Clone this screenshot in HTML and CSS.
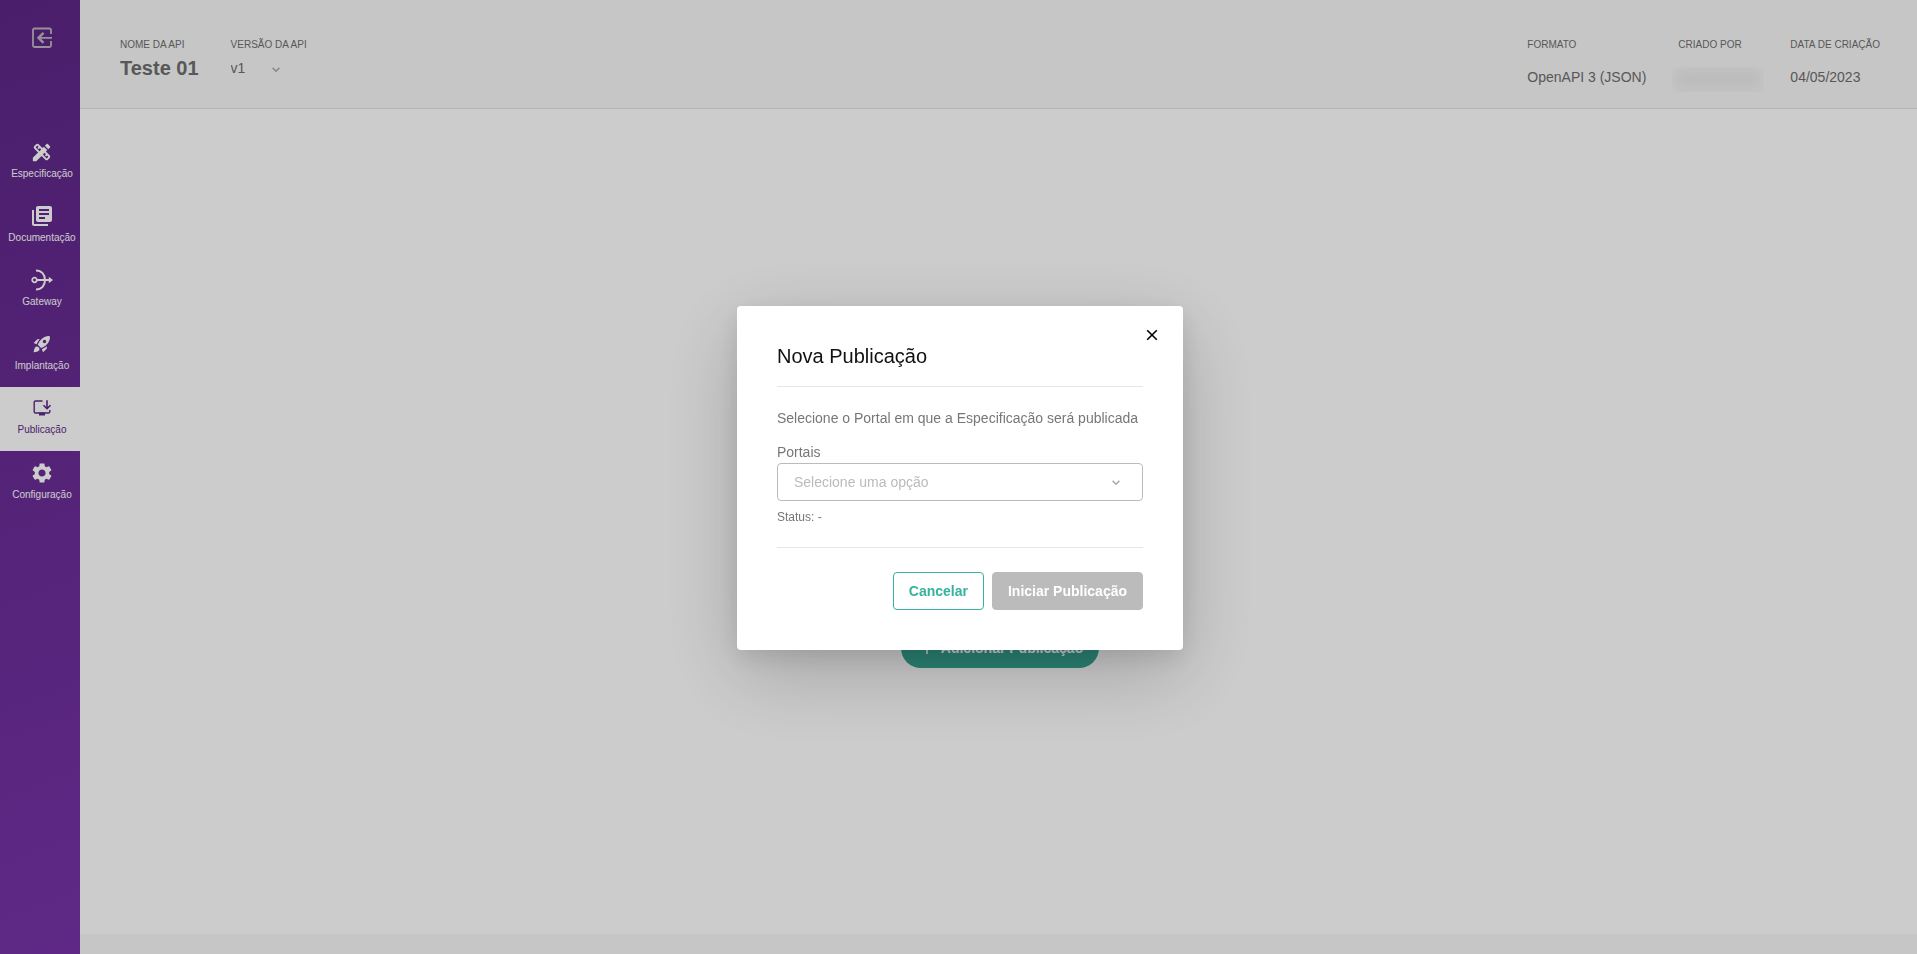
FILE: index.html
```html
<!DOCTYPE html>
<html lang="pt-BR">
<head>
<meta charset="utf-8">
<meta name="viewport" content="width=device-width, initial-scale=1">
<title>Teste 01 - Publicação</title>
<link rel="stylesheet" href="styles.css">
</head>
<body>
<div class="app">
  <aside class="sidebar">
    <button class="sidebar-exit" type="button" aria-label="Sair">
      <svg width="22" height="22" viewBox="0 0 22 22" fill="none" stroke="currentColor" stroke-width="1.800"><path d="M20 7V3a1.500 1.500 0 0 0-1.500-1.500h-15A1.500 1.500 0 0 0 2 3v15.500A1.500 1.500 0 0 0 3.500 20h15a1.500 1.500 0 0 0 1.500-1.500V14M21 10.800H8"/><path d="M12.500 5.800l-5 5 5 5" stroke-width="2.400"/></svg>
    </button>
    <nav class="nav">
      <a class="nav-item" href="#especificacao">
        <svg class="nav-icon" viewBox="0 0 24 24" fill="currentColor"><path d="M16.240 11.510l1.570-1.570-3.750-3.750-1.570 1.570-4.140-4.130c-.78-.78-2.050-.78-2.830 0l-1.900 1.900c-.78.780-.78 2.050 0 2.830l4.130 4.130L2 18.250V22h3.750l5.760-5.760 4.130 4.130c.95.950 2.230.6 2.830 0l1.900-1.900c.78-.78.78-2.050 0-2.830l-4.130-4.130zm-7.060-.44L5.040 6.940l1.890-1.900L8.200 6.310 7.020 7.500l1.410 1.410 1.190-1.190 1.450 1.450-1.890 1.900zm7.880 7.890l-4.130-4.130 1.900-1.900 1.450 1.450-1.190 1.190 1.410 1.410 1.190-1.190 1.270 1.270-1.900 1.900zM20.710 7.040a1 1 0 0 0 0-1.410l-2.340-2.340c-.47-.47-1.120-.29-1.410 0l-1.830 1.830 3.750 3.750 1.830-1.830z"/></svg>
        <span>Especificação</span>
      </a>
      <a class="nav-item" href="#documentacao">
        <svg class="nav-icon nav-icon-large" viewBox="0 0 24 24" fill="currentColor"><path d="M4 6H2v14c0 1.100.9 2 2 2h14v-2H4V6zm16-4H8c-1.100 0-2 .9-2 2v12c0 1.100.9 2 2 2h12c1.100 0 2-.9 2-2V4c0-1.100-.9-2-2-2zm-1 9H9V9h10v2zm-4 4H9v-2h6v2zm4-8H9V5h10v2z"/></svg>
        <span>Documentação</span>
      </a>
      <a class="nav-item" href="#gateway">
        <svg class="nav-icon" viewBox="0 0 22 22" fill="none" stroke="currentColor" stroke-width="2"><path d="M5 1.500c5.500 0 9 4 9 9.500s-3.500 9.500-9 9.500M6 11h14"/><circle cx="3.500" cy="11" r="2.300" stroke-width="1.700"/><path d="M17.800 7.800L22 11l-4.200 3.200z" fill="currentColor" stroke="none"/></svg>
        <span>Gateway</span>
      </a>
      <a class="nav-item" href="#implantacao">
        <svg class="nav-icon nav-icon-small" viewBox="0 0 24 24" fill="currentColor"><path d="M9.190 6.350c-2.040 2.290-3.440 5.580-3.570 5.890L2 10.690l4.050-4.050c.47-.47 1.150-.68 1.810-.55l1.330.26zM11.170 17s3.740-1.550 5.890-3.700c5.400-5.400 4.500-9.620 4.210-10.570-.95-.3-5.170-1.190-10.570 4.210C8.550 9.090 7 12.830 7 12.830L11.170 17zm6.480-2.190c-2.290 2.040-5.580 3.440-5.890 3.570L13.310 22l4.050-4.050c.47-.47.68-1.150.55-1.810l-.26-1.330zM9 18c0 .83-.34 1.580-.88 2.120C6.940 21.300 2 22 2 22s.7-4.940 1.880-6.120A3 3 0 0 1 9 18zm4-9c0-1.100.9-2 2-2s2 .9 2 2-.9 2-2 2-2-.9-2-2z"/></svg>
        <span>Implantação</span>
      </a>
      <a class="nav-item nav-item-active" href="#publicacao" aria-current="page">
        <svg class="nav-icon nav-icon-small" viewBox="0 0 20 20" fill="none" stroke="currentColor" stroke-width="1.400"><path d="M10.500 3H3.500C2.700 3 2.200 3.500 2.200 4.300v9.400c0 .8.500 1.300 1.300 1.300h13c.8 0 1.300-.5 1.300-1.300V12"/><path d="M15 2.300v8M11.500 7.200L15 10.700l3.500-3.500" stroke-width="1.600"/><path d="M7 14.500h6v3H7z" fill="currentColor" stroke="none"/></svg>
        <span>Publicação</span>
      </a>
      <a class="nav-item" href="#configuracao">
        <svg class="nav-icon nav-icon-large" viewBox="0 0 24 24" fill="currentColor"><path d="M19.140 12.940c.04-.3.060-.61.060-.94 0-.32-.02-.64-.07-.94l2.030-1.580c.18-.14.23-.41.120-.61l-1.920-3.320c-.12-.22-.37-.29-.59-.22l-2.390.96c-.5-.38-1.030-.7-1.620-.94l-.36-2.540c-.04-.24-.24-.41-.48-.41h-3.840c-.24 0-.43.170-.47.410l-.36 2.540c-.59.240-1.130.57-1.620.94l-2.390-.96c-.22-.08-.47 0-.59.220L2.740 8.870c-.12.210-.08.470.120.610l2.030 1.580c-.05.300-.09.630-.09.940s.02.640.07.940l-2.030 1.580c-.18.140-.23.410-.12.610l1.920 3.320c.12.220.37.290.59.220l2.390-.96c.5.380 1.030.7 1.620.94l.36 2.540c.05.240.24.410.48.410h3.840c.24 0 .44-.17.470-.41l.36-2.540c.59-.24 1.130-.56 1.620-.94l2.390.96c.22.080.47 0 .59-.22l1.920-3.320c.12-.22.070-.47-.12-.61l-2.010-1.580zM12 15.600c-1.980 0-3.600-1.620-3.600-3.600s1.620-3.600 3.600-3.600 3.600 1.620 3.600 3.600-1.620 3.600-3.600 3.600z"/></svg>
        <span>Configuração</span>
      </a>
    </nav>
  </aside>

  <div class="page">
    <header class="topbar">
      <div class="group">
        <div class="field">
          <span class="field-label">NOME DA API</span>
          <h1 class="api-name">Teste 01</h1>
        </div>
        <div class="field">
          <label class="field-label" for="versao">VERSÃO DA API</label>
          <span class="version">
            <select id="versao" class="version-select"><option>v1</option></select>
            <svg class="version-chevron" width="8" height="6" viewBox="0 0 8 6" fill="none" stroke="currentColor" stroke-width="1.500"><path d="M.6.900L4 4.300 7.400.900"/></svg>
          </span>
        </div>
      </div>
      <div class="group">
        <div class="field">
          <span class="field-label">FORMATO</span>
          <span class="field-value">OpenAPI 3 (JSON)</span>
        </div>
        <div class="field field-author">
          <span class="field-label">CRIADO POR</span>
          <span class="redacted"></span>
        </div>
        <div class="field">
          <span class="field-label">DATA DE CRIAÇÃO</span>
          <span class="field-value">04/05/2023</span>
        </div>
      </div>
    </header>
    <main class="content">
      <button class="add-button" type="button"><svg width="14" height="14" viewBox="0 0 14 14" fill="none" stroke="currentColor" stroke-width="1.500"><path d="M7 1v12M1 7h12"/></svg>Adicionar Publicação</button>
    </main>
    <footer class="footer"></footer>
  </div>
</div>

<div class="overlay">
  <section class="dialog" role="dialog" aria-modal="true" aria-labelledby="dialog-title">
    <button class="dialog-close" type="button" aria-label="Fechar">
      <svg width="12" height="12" viewBox="0 0 12 12" fill="none" stroke="currentColor" stroke-width="1.600"><path d="M1.200 1.200l9.600 9.600M10.800 1.200l-9.600 9.600"/></svg>
    </button>
    <h2 class="dialog-title" id="dialog-title">Nova Publicação</h2>
    <div class="dialog-body">
      <p class="dialog-text">Selecione o Portal em que a Especificação será publicada</p>
      <label class="dialog-label" for="portais">Portais</label>
      <span class="portal">
        <select id="portais" class="portal-select"><option>Selecione uma opção</option></select>
        <svg class="portal-chevron" width="8" height="6" viewBox="0 0 8 6" fill="none" stroke="currentColor" stroke-width="1.500"><path d="M.6.900L4 4.300 7.400.900"/></svg>
      </span>
      <p class="status">Status: -</p>
    </div>
    <div class="dialog-actions">
      <button class="button button-outline" type="button">Cancelar</button>
      <button class="button button-disabled" type="button" disabled>Iniciar Publicação</button>
    </div>
  </section>
</div>
</body>
</html>
```
FILE: styles.css
```css
* {
  box-sizing: border-box;
}

body {
  margin: 0;
  font-family: "Liberation Sans", Arial, sans-serif;
  font-size: 14px;
  line-height: 20px;
  color: #6e6e6e;
  background: #fff;
}

button,
select {
  font: inherit;
  cursor: pointer;
}

h1,
h2,
p {
  margin: 0;
}

.app {
  display: flex;
  min-height: 100vh;
}

/* Sidebar */

.sidebar {
  flex: none;
  width: 80px;
  background: linear-gradient(160deg, #5d2686, #7733a8);
}

.sidebar-exit {
  display: flex;
  justify-content: center;
  width: 100%;
  height: 131px;
  padding: 27px 0 0 4px;
  border: 0;
  background: none;
  color: #bdb8c0;
}

.nav {
  display: flex;
  flex-direction: column;
}

.nav-item {
  display: flex;
  flex-direction: column;
  align-items: center;
  gap: 5px;
  height: 64px;
  padding: 10px 0 0 4px;
  font-size: 10px;
  line-height: 12px;
  color: #fff;
  text-decoration: none;
}

.nav-item:last-child {
  padding-top: 11px;
}

.nav-item-active {
  background: #fff;
  color: #5f2a87;
}

.nav-icon {
  width: 22px;
  height: 22px;
}

.nav-icon-large {
  width: 24px;
  height: 24px;
  margin: -1px;
}

.nav-icon-small {
  width: 20px;
  height: 20px;
  margin: 1px;
}

/* Page */

.page {
  flex: 1;
  display: flex;
  flex-direction: column;
}

.topbar {
  display: flex;
  justify-content: space-between;
  height: 109px;
  padding: 39px 37px 0 40px;
  background: #f8f8f8;
  border-bottom: 1px solid #e4e4e4;
}

.group {
  display: flex;
  gap: 32px;
}

.field {
  display: flex;
  flex-direction: column;
}

.field-author {
  width: 80px;
}

.field-label {
  font-size: 10px;
  line-height: 12px;
}

.field-value {
  margin-top: 16px;
}

.api-name {
  margin-top: 5px;
  font-size: 20px;
  line-height: 24px;
}

.version {
  position: relative;
  width: 49px;
  margin-top: 7px;
}

.version-select {
  display: block;
  width: 100%;
  padding: 0;
  border: 0;
  background: none;
  color: inherit;
  appearance: none;
}

.version-chevron {
  position: absolute;
  top: 9px;
  right: 0;
  color: #aaa;
  pointer-events: none;
}

.redacted {
  height: 25px;
  margin: 16px -6px 0;
  background: #ebebeb;
  box-shadow: inset 0 0 12px 4px #f6f6f6;
}

.content {
  flex: 1;
  display: flex;
  align-items: flex-end;
  justify-content: center;
  padding: 0 0 266px 3px;
}

.add-button {
  display: flex;
  align-items: center;
  gap: 7px;
  height: 40px;
  padding: 0 16px 0 19px;
  border: 0;
  border-radius: 20px;
  background: #36a592;
  color: #fff;
  font-weight: bold;
}

.footer {
  height: 20px;
  background: #f8f8f8;
}

/* Dialog */

.overlay {
  position: fixed;
  inset: 0;
  display: flex;
  align-items: center;
  justify-content: center;
  padding: 2px 0 0 3px;
  background: rgba(0, 0, 0, 0.2);
}

.dialog {
  position: relative;
  padding: 36px 40px 40px;
  border-radius: 4px;
  background: #fff;
  color: #777;
  box-shadow: 0 24px 80px rgba(0, 0, 0, 0.2), 0 8px 24px rgba(0, 0, 0, 0.1);
}

.dialog-close {
  position: absolute;
  top: 18px;
  right: 20px;
  display: flex;
  padding: 5px;
  border: 0;
  background: none;
  color: #000;
}

.dialog-title {
  padding-bottom: 16px;
  border-bottom: 1px solid #e6e6e6;
  font-size: 20px;
  font-weight: normal;
  line-height: 28px;
  color: #111;
}

.dialog-body {
  display: flex;
  flex-direction: column;
  padding: 21px 0 22px;
  border-bottom: 1px solid #e6e6e6;
}

.dialog-text {
  padding-right: 5px;
}

.dialog-label {
  margin-top: 14px;
  padding-bottom: 1px;
}

.portal {
  position: relative;
}

.portal-select {
  display: block;
  width: 100%;
  height: 38px;
  padding: 0 40px 0 16px;
  border: 1px solid #bbb;
  border-radius: 4px;
  background: #fff;
  color: #bbb;
  appearance: none;
}

.portal-chevron {
  position: absolute;
  top: 17px;
  right: 23px;
  color: #aaa;
  pointer-events: none;
}

.status {
  margin-top: 8px;
  font-size: 12px;
  line-height: 16px;
}

.dialog-actions {
  display: flex;
  justify-content: flex-end;
  gap: 8px;
  padding-top: 24px;
}

.button {
  height: 38px;
  padding: 0 15px;
  border: 1px solid;
  border-radius: 4px;
  font-weight: bold;
}

.button-outline {
  border-color: #36b39d;
  background: #fff;
  color: #36b39d;
}

.button-disabled {
  border-color: #bbb;
  background: #bbb;
  color: #fff;
  cursor: default;
}
```
